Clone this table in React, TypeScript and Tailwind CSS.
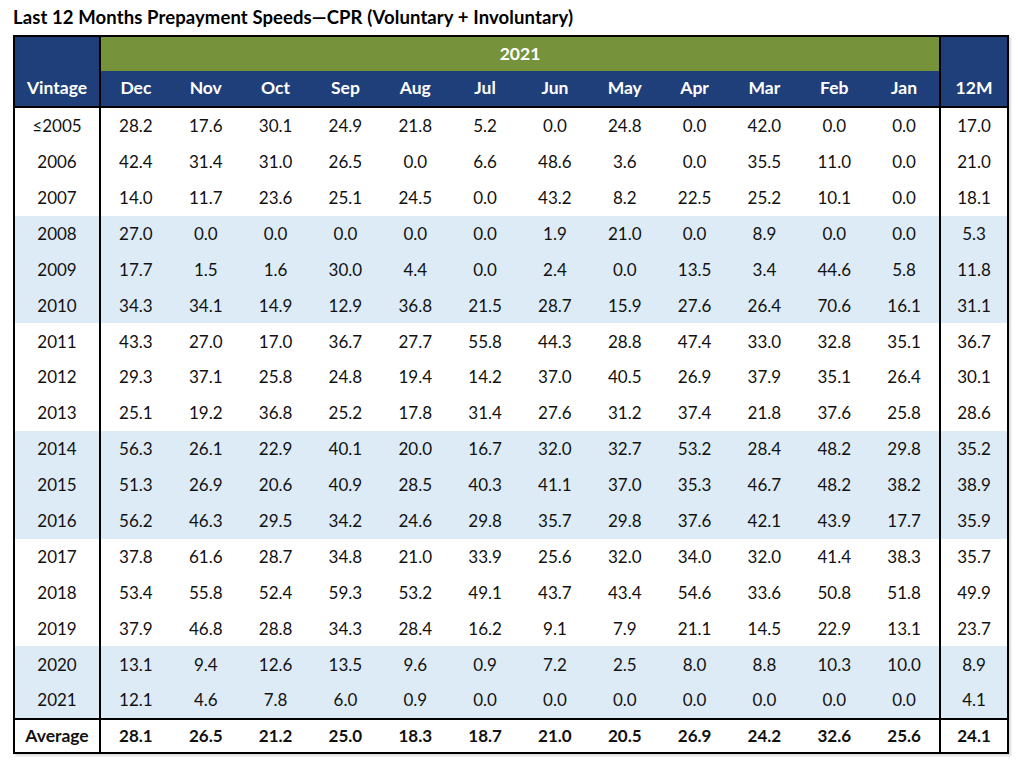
import React from "react";

const months = ["Dec", "Nov", "Oct", "Sep", "Aug", "Jul", "Jun", "May", "Apr", "Mar", "Feb", "Jan"];

const rows: [string, string[], string, boolean][] = [
  ["≤2005", ["28.2", "17.6", "30.1", "24.9", "21.8", "5.2", "0.0", "24.8", "0.0", "42.0", "0.0", "0.0"], "17.0", false],
  ["2006", ["42.4", "31.4", "31.0", "26.5", "0.0", "6.6", "48.6", "3.6", "0.0", "35.5", "11.0", "0.0"], "21.0", false],
  ["2007", ["14.0", "11.7", "23.6", "25.1", "24.5", "0.0", "43.2", "8.2", "22.5", "25.2", "10.1", "0.0"], "18.1", false],
  ["2008", ["27.0", "0.0", "0.0", "0.0", "0.0", "0.0", "1.9", "21.0", "0.0", "8.9", "0.0", "0.0"], "5.3", true],
  ["2009", ["17.7", "1.5", "1.6", "30.0", "4.4", "0.0", "2.4", "0.0", "13.5", "3.4", "44.6", "5.8"], "11.8", true],
  ["2010", ["34.3", "34.1", "14.9", "12.9", "36.8", "21.5", "28.7", "15.9", "27.6", "26.4", "70.6", "16.1"], "31.1", true],
  ["2011", ["43.3", "27.0", "17.0", "36.7", "27.7", "55.8", "44.3", "28.8", "47.4", "33.0", "32.8", "35.1"], "36.7", false],
  ["2012", ["29.3", "37.1", "25.8", "24.8", "19.4", "14.2", "37.0", "40.5", "26.9", "37.9", "35.1", "26.4"], "30.1", false],
  ["2013", ["25.1", "19.2", "36.8", "25.2", "17.8", "31.4", "27.6", "31.2", "37.4", "21.8", "37.6", "25.8"], "28.6", false],
  ["2014", ["56.3", "26.1", "22.9", "40.1", "20.0", "16.7", "32.0", "32.7", "53.2", "28.4", "48.2", "29.8"], "35.2", true],
  ["2015", ["51.3", "26.9", "20.6", "40.9", "28.5", "40.3", "41.1", "37.0", "35.3", "46.7", "48.2", "38.2"], "38.9", true],
  ["2016", ["56.2", "46.3", "29.5", "34.2", "24.6", "29.8", "35.7", "29.8", "37.6", "42.1", "43.9", "17.7"], "35.9", true],
  ["2017", ["37.8", "61.6", "28.7", "34.8", "21.0", "33.9", "25.6", "32.0", "34.0", "32.0", "41.4", "38.3"], "35.7", false],
  ["2018", ["53.4", "55.8", "52.4", "59.3", "53.2", "49.1", "43.7", "43.4", "54.6", "33.6", "50.8", "51.8"], "49.9", false],
  ["2019", ["37.9", "46.8", "28.8", "34.3", "28.4", "16.2", "9.1", "7.9", "21.1", "14.5", "22.9", "13.1"], "23.7", false],
  ["2020", ["13.1", "9.4", "12.6", "13.5", "9.6", "0.9", "7.2", "2.5", "8.0", "8.8", "10.3", "10.0"], "8.9", true],
  ["2021", ["12.1", "4.6", "7.8", "6.0", "0.9", "0.0", "0.0", "0.0", "0.0", "0.0", "0.0", "0.0"], "4.1", true],
];

const avg = ["28.1", "26.5", "21.2", "25.0", "18.3", "18.7", "21.0", "20.5", "26.9", "24.2", "32.6", "25.6"];

const grid = "grid grid-cols-[86px_repeat(12,minmax(0,1fr))_68px]";

export default function App() {
  return (
    <div className="w-[1024px] h-[778px] bg-white text-[#111] font-['Lato','Liberation_Sans',sans-serif]">
      <div className="h-[35px] pl-[13px] pt-[6px] text-[18.5px] font-bold leading-[23px] text-black tracking-[0.1px]">
        Last 12 Months Prepayment Speeds—CPR (Voluntary + Involuntary)
      </div>
      <div className="ml-[13px] w-[996px] border-2 border-black shadow-[2px_2px_2px_rgba(0,0,0,0.15)]">
        {/* header */}
        <div className={`${grid} grid-rows-[34px_35px] border-b-2 border-black text-white font-bold text-[17.5px]`}>
          <div className="row-span-2 bg-[#1f3f7b] border-r-2 border-black flex items-center justify-center pt-[34px]">
            Vintage
          </div>
          <div className="col-span-12 bg-[#76933c] flex items-center justify-center">2021</div>
          <div className="row-span-2 bg-[#1f3f7b] border-l-2 border-black flex items-center justify-center pt-[34px]">
            12M
          </div>
          {months.map((m) => (
            <div key={m} className="bg-[#1f3f7b] flex items-center justify-center">
              {m}
            </div>
          ))}
        </div>
        {/* body */}
        {rows.map(([v, vals, t, shaded]) => (
          <div key={v} className={`${grid} h-[35.9px] text-[17px] ${shaded ? "bg-[#ddebf7]" : "bg-white"}`}>
            <div className="border-r-2 border-black flex items-center justify-center">{v}</div>
            {vals.map((x, i) => (
              <div key={i} className="flex items-center justify-center">
                {x}
              </div>
            ))}
            <div className="border-l-2 border-black flex items-center justify-center">{t}</div>
          </div>
        ))}
        <div className={`${grid} h-[34px] border-t-2 border-black text-[17px] font-bold bg-white`}>
          <div className="border-r-2 border-black flex items-center justify-center text-[17.5px]">Average</div>
          {avg.map((x, i) => (
            <div key={i} className="flex items-center justify-center">
              {x}
            </div>
          ))}
          <div className="border-l-2 border-black flex items-center justify-center">24.1</div>
        </div>
      </div>
    </div>
  );
}
